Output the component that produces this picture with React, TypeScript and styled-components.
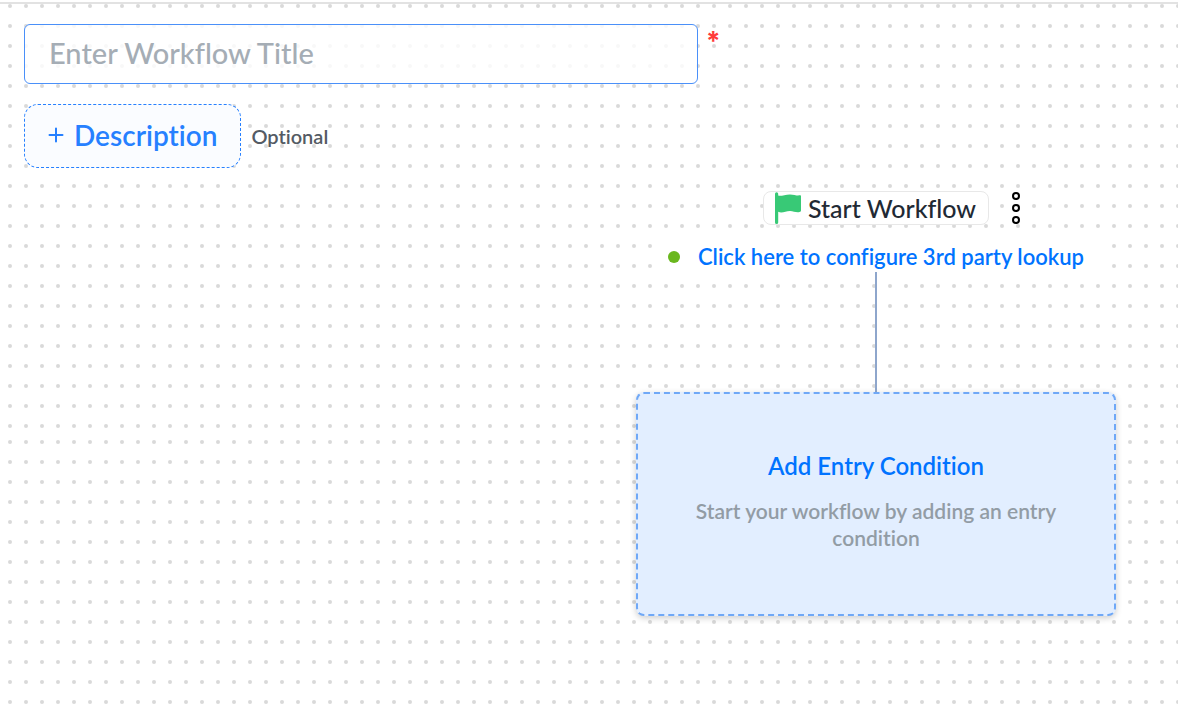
import React from "react";
import styled, { createGlobalStyle } from "styled-components";

const rows = Array.from({ length: 22 }, (_, i) => `<circle cx='10' cy='${6 + i * 20}' r='2'/>`).join("");
const dots = encodeURIComponent(
  `<svg xmlns='http://www.w3.org/2000/svg' width='16' height='436' fill='#d9d9d9'>${rows}</svg>`
);

const GlobalStyle = createGlobalStyle`
  *, *::before, *::after { box-sizing: border-box; }
  body {
    margin: 0;
    background: #fff;
    font-family: Lato, sans-serif;
    font-variant-ligatures: no-common-ligatures;
    color: #212934;
  }
  button, input { font: inherit; font-variant-ligatures: inherit; }
`;

const Canvas = styled.main`
  display: flex;
  flex-direction: column;
  min-height: 100vh;
  padding: 2px 0 24px;
  background: url("data:image/svg+xml,${dots}");
`;

const TopRule = styled.hr`
  width: 100%;
  height: 2px;
  margin: 0;
  border: 0;
  background: #e2e2e2;
`;

const Header = styled.header`
  display: flex;
  flex-direction: column;
  gap: 20px;
  padding: 20px 24px 0;
`;

const TitleRow = styled.div`
  display: flex;
  align-items: flex-start;
  gap: 8px;
`;

const TitleInput = styled.input`
  width: 60%;
  max-width: 674px;
  height: 60px;
  padding: 0 24px 4px;
  border: 1px solid #4a90f9;
  border-radius: 6px;
  outline: 0;
  background: rgba(255, 255, 255, 0.8);
  font-size: 29px;
  font-weight: 500;
  &::placeholder { color: #a5adb5; opacity: 1; }
`;

const Required = styled.span`
  color: #ff3b3b;
  font: 700 26px/34px Inter, sans-serif;
`;

const DescriptionRow = styled.div`
  display: flex;
  align-items: center;
  gap: 10px;
`;

const DescriptionButton = styled.button`
  display: flex;
  align-items: center;
  gap: 10px;
  height: 64px;
  padding: 0 23px 2px;
  border: 1px dashed #2680ff;
  border-radius: 14px;
  background: #fafcff;
  color: #2680ff;
  font-size: 28px;
  font-weight: 600;
`;

const Hint = styled.span`
  color: #545b64;
  font-size: 20px;
  font-weight: 600;
  line-height: 26px;
`;

const Flow = styled.section`
  display: flex;
  flex-direction: column;
  align-items: center;
  align-self: flex-end;
  width: 480px;
  max-width: 100%;
  margin: 23px 62px 0 0;
`;

const StartRow = styled.div`
  display: grid;
  grid-template-columns: 1fr auto 1fr;
  align-items: center;
  width: 100%;
`;

const StartNode = styled.div`
  display: flex;
  align-items: center;
  grid-column: 2;
  gap: 6px;
  height: 34px;
  padding: 0 12px 0 10px;
  border: 1px solid #e8e8e8;
  border-radius: 8px;
  background: #fff;
  font-size: 25px;
  font-weight: 500;
  line-height: 28px;
`;

const MenuButton = styled.button`
  display: flex;
  justify-self: start;
  margin-left: 20px;
  padding: 0;
  border: 0;
  background: none;
`;

const LookupRow = styled.div`
  display: flex;
  align-items: center;
  gap: 18px;
  height: 32px;
  margin-top: 15px;
  padding: 2px 16px 0;
  background: #fff;
`;

const StatusDot = styled.span`
  width: 12px;
  height: 12px;
  border-radius: 50%;
  background: #6ab71e;
`;

const LookupLink = styled.a`
  padding-bottom: 2px;
  color: #0073ff;
  font-size: 22px;
  font-weight: 600;
  text-decoration: none;
`;

const Connector = styled.div`
  width: 2px;
  height: 120px;
  background: #8ea6cc;
`;

const EntryCard = styled.button`
  display: flex;
  flex-direction: column;
  align-items: center;
  justify-content: center;
  gap: 15px;
  width: 100%;
  min-height: 224px;
  padding: 0 48px 7px;
  border: 2px dashed #6fa8f7;
  border-radius: 8px;
  background: #e2eeff;
  box-shadow: 0 2px 6px rgba(0, 0, 0, 0.2);
`;

const CardTitle = styled.span`
  color: #0073ff;
  font-size: 24px;
  font-weight: 600;
  line-height: 32px;
`;

const CardText = styled.span`
  color: #929ca5;
  font-size: 21px;
  font-weight: 600;
  line-height: 27px;
`;

const PlusIcon = () => (
  <svg width="16" height="16" viewBox="0 0 16 16" fill="none" stroke="currentColor" strokeWidth="2" strokeLinecap="round" aria-hidden="true">
    <path d="M8 1.5v13M1.5 8h13" />
  </svg>
);

const FlagIcon = () => (
  <svg width="28" height="32" viewBox="0 0 28 32" fill="#38c976" aria-hidden="true">
    <path d="M1 1.8a1.6 1.6 0 0 1 3.2 0V3.600C7 4.500 11 2.400 16 2.400c4 0 7 1.500 9.600.900.800-.2 1.400.1 1.400 1v14c0 1-.5 1.500-1.500 1.700-3.500.8-6-1.100-9.500-1.100-4.500 0-7.500 2.600-11.800.9V30.400a1.600 1.600 0 0 1-3.200 0Z" />
  </svg>
);

const MoreIcon = () => (
  <svg width="14" height="34" viewBox="0 0 14 34" fill="#fff" stroke="#000" strokeWidth="2" aria-hidden="true">
    <circle cx="7" cy="5" r="3" />
    <circle cx="7" cy="17" r="3" />
    <circle cx="7" cy="29" r="3" />
  </svg>
);

export default function App() {
  return (
    <>
      <GlobalStyle />
      <Canvas>
        <TopRule />
        <Header>
          <TitleRow>
            <TitleInput aria-label="Workflow title" placeholder="Enter Workflow Title" required />
            <Required>*</Required>
          </TitleRow>
          <DescriptionRow>
            <DescriptionButton type="button">
              <PlusIcon />
              Description
            </DescriptionButton>
            <Hint>Optional</Hint>
          </DescriptionRow>
        </Header>
        <Flow>
          <StartRow>
            <StartNode>
              <FlagIcon />
              Start Workflow
            </StartNode>
            <MenuButton type="button" aria-label="Workflow options">
              <MoreIcon />
            </MenuButton>
          </StartRow>
          <LookupRow>
            <StatusDot />
            <LookupLink href="#lookup">Click here to configure 3rd party lookup</LookupLink>
          </LookupRow>
          <Connector />
          <EntryCard type="button">
            <CardTitle>Add Entry Condition</CardTitle>
            <CardText>Start your workflow by adding an entry condition</CardText>
          </EntryCard>
        </Flow>
      </Canvas>
    </>
  );
}
